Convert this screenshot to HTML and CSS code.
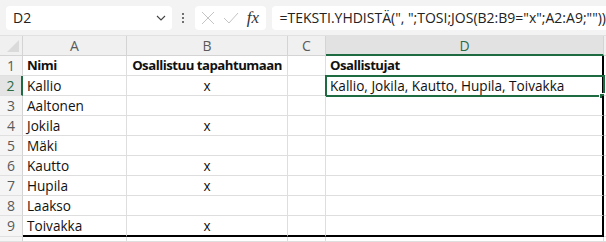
FILE: index.html
```html
<!DOCTYPE html>
<html lang="fi">
<head>
    <meta charset="UTF-8">
    <title>Osallistujat</title>
    <link rel="stylesheet" href="styles.css">
</head>
<body>
    <div class="toolbar">
        <div class="namebox">
            <span>D2</span>
            <svg class="chev" width="10" height="6" viewBox="0 0 10 6"><path d="M1 1 L5 5 L9 1" fill="none" stroke="#444" stroke-width="1.1"/></svg>
        </div>
        <div class="dots"><i></i><i></i><i></i></div>
        <div class="fxbox">
            <svg width="14" height="14" viewBox="0 0 14 14"><path d="M1 1 L13 13 M13 1 L1 13" stroke="#c4c4c4" stroke-width="1"/></svg>
            <svg width="16" height="12" viewBox="0 0 16 12"><path d="M1 6 L6 11 L15 1" fill="none" stroke="#c4c4c4" stroke-width="1"/></svg>
            <span class="fx">fx</span>
        </div>
        <div class="formula">=TEKSTI.YHDISTÄ(", ";TOSI;JOS(B2:B9="x";A2:A9;""))</div>
    </div>

    <div class="sheet">
        <div class="corner"><span class="tri"></span></div>
        <div class="colhead">A</div>
        <div class="colhead">B</div>
        <div class="colhead">C</div>
        <div class="colhead active">D</div>
        <div class="colhead edge"></div>

        <div class="rowhead">1</div>
        <div class="cell bold">Nimi</div>
        <div class="cell bold center">Osallistuu tapahtumaan</div>
        <div class="cell"></div>
        <div class="cell bold rb">Osallistujat</div>
        <div class="cell edge"></div>

        <div class="rowhead active">2</div>
        <div class="cell">Kallio</div>
        <div class="cell center">x</div>
        <div class="cell"></div>
        <div class="cell rb selected">Kallio, Jokila, Kautto, Hupila, Toivakka<span class="handle"></span></div>
        <div class="cell edge"></div>

        <div class="rowhead">3</div>
        <div class="cell">Aaltonen</div>
        <div class="cell center"></div>
        <div class="cell"></div>
        <div class="cell rb"></div>
        <div class="cell edge"></div>

        <div class="rowhead">4</div>
        <div class="cell">Jokila</div>
        <div class="cell center">x</div>
        <div class="cell"></div>
        <div class="cell rb"></div>
        <div class="cell edge"></div>

        <div class="rowhead">5</div>
        <div class="cell">Mäki</div>
        <div class="cell center"></div>
        <div class="cell"></div>
        <div class="cell rb"></div>
        <div class="cell edge"></div>

        <div class="rowhead">6</div>
        <div class="cell">Kautto</div>
        <div class="cell center">x</div>
        <div class="cell"></div>
        <div class="cell rb"></div>
        <div class="cell edge"></div>

        <div class="rowhead">7</div>
        <div class="cell">Hupila</div>
        <div class="cell center">x</div>
        <div class="cell"></div>
        <div class="cell rb"></div>
        <div class="cell edge"></div>

        <div class="rowhead">8</div>
        <div class="cell">Laakso</div>
        <div class="cell center"></div>
        <div class="cell"></div>
        <div class="cell rb"></div>
        <div class="cell edge"></div>

        <div class="rowhead">9</div>
        <div class="cell bb">Toivakka</div>
        <div class="cell center bb">x</div>
        <div class="cell bb"></div>
        <div class="cell rb bb"></div>
        <div class="cell edge"></div>

        <div class="rowhead"></div>
        <div class="cell"></div>
        <div class="cell"></div>
        <div class="cell"></div>
        <div class="cell"></div>
        <div class="cell edge"></div>
    </div>
</body>
</html>
```

FILE: styles.css
```css
* {
    margin: 0;
    padding: 0;
    box-sizing: border-box;
}
body {
    width: 606px;
    height: 242px;
    overflow: hidden;
    background: #ffffff;
    font-family: "Open Sans", "Noto Sans", sans-serif;
    color: #000;
}
.toolbar {
    height: 36px;
    background: #f3f3f3;
    display: flex;
    align-items: center;
    padding-left: 6px;
    border-bottom: 1px solid #e1e1e1;
}
.namebox {
    width: 169px;
    height: 24px;
    background: #fff;
    border-radius: 4px;
    display: flex;
    align-items: center;
    justify-content: space-between;
    padding: 0 6px 0 7px;
    font-size: 14px;
    color: #222;
}
.dots {
    width: 23px;
    display: flex;
    flex-direction: column;
    align-items: center;
    gap: 2px;
}
.dots i {
    width: 2px;
    height: 2px;
    background: #444;
    border-radius: 1px;
}
.fxbox {
    width: 72px;
    height: 24px;
    background: #fff;
    border-radius: 4px;
    display: flex;
    align-items: center;
    gap: 8px;
    padding-left: 6px;
}
.fx {
    font-family: "Liberation Serif", "DejaVu Serif", serif;
    font-style: italic;
    font-size: 17px;
    color: #333;
}
.formula {
    margin-left: 6px;
    flex: 1;
    height: 24px;
    background: #fff;
    border-radius: 4px 0 0 4px;
    padding-left: 8px;
    font-size: 14px;
    line-height: 24px;
    color: #222;
    white-space: nowrap;
}
.sheet {
    display: grid;
    grid-template-columns: 23px 104px 161px 38px 278px 2px;
    grid-template-rows: 20px repeat(8, 20px) 21px 5px;
    font-size: 13.6px;
    color: #111;
}
.corner {
    background: #f0f0f0;
    border-right: 1px solid #d4d4d4;
    border-bottom: 1px solid #d4d4d4;
    position: relative;
}
.tri {
    position: absolute;
    right: 3px;
    bottom: 3px;
    width: 0;
    height: 0;
    border-left: 12px solid transparent;
    border-bottom: 12px solid #dadada;
}
.colhead {
    background: #f0f0f0;
    border-right: 1px solid #d4d4d4;
    border-bottom: 1px solid #d4d4d4;
    color: #5a5a5a;
    text-align: center;
    line-height: 19px;
    font-size: 14px;
}
.colhead.active {
    background: #e2e2e2;
    border-bottom: 2px solid #1e6b41;
    color: #2a6b44;
}
.rowhead {
    background: #f5f5f5;
    border-right: 1px solid #d4d4d4;
    border-bottom: 1px solid #e0e0e0;
    color: #5a5a5a;
    text-align: center;
    line-height: 19px;
    font-size: 14px;
}
.rowhead.active {
    background: #e4e4e4;
    border-right: 2px solid #1e6b41;
    color: #2a6b44;
}
.cell {
    border-right: 1px solid #dedede;
    border-bottom: 1px solid #dedede;
    padding-left: 4px;
    line-height: 19px;
    white-space: nowrap;
    position: relative;
}
.bold {
    font-weight: bold;
    font-size: 13.2px;
    letter-spacing: -0.5px;
}
.center {
    text-align: center;
    padding-left: 0;
}
.rb {
    border-right: 2px solid #000;
}
.bb {
    border-bottom: 2px solid #000;
}
.edge {
    border-right: none;
    padding: 0;
}
.selected {
    outline: 2px solid #1e6b41;
    outline-offset: -1px;
}
.handle {
    position: absolute;
    right: -3px;
    bottom: -4px;
    width: 6px;
    height: 6px;
    background: #1e6b41;
    border: 1px solid #fff;
}
```
